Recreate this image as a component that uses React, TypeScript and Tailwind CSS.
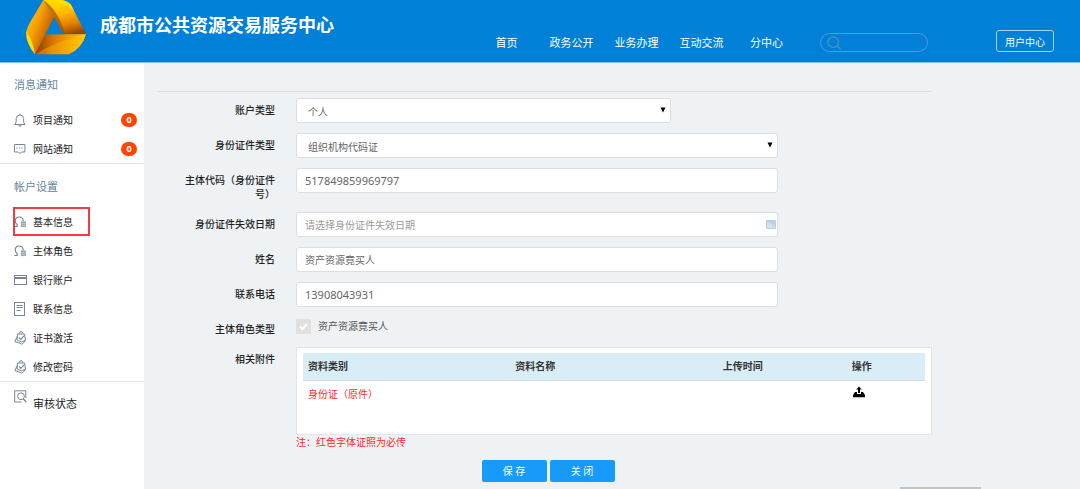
import React, { useState } from 'react';

const NAV = ['首页', '政务公开', '业务办理', '互动交流', '分中心'];

type IconName = 'bell' | 'message' | 'role' | 'card' | 'doc' | 'cert' | 'audit';

interface MenuItem {
  label: string;
  icon: IconName;
  badge?: number;
  active?: boolean;
}

const NOTICES: MenuItem[] = [
  { label: '项目通知', icon: 'bell', badge: 0 },
  { label: '网站通知', icon: 'message', badge: 0 },
];

const SETTINGS: MenuItem[] = [
  { label: '基本信息', icon: 'role', active: true },
  { label: '主体角色', icon: 'role' },
  { label: '银行账户', icon: 'card' },
  { label: '联系信息', icon: 'doc' },
  { label: '证书激活', icon: 'cert' },
  { label: '修改密码', icon: 'cert' },
];

const FIELD = 'block w-full h-[25px] rounded-[3px] border border-[#dcdfe1] bg-white text-[#666] outline-none';

const Logo = () => (
  <svg viewBox="78 0 180 165" className="w-[60px] h-[55px] shrink-0" aria-hidden="true">
    <defs>
      <linearGradient id="left" gradientUnits="userSpaceOnUse" x1="82" y1="60" x2="160" y2="90">
        <stop offset="0" stopColor="#ffc200" />
        <stop offset="0.4" stopColor="#f59a00" />
        <stop offset="1" stopColor="#b25200" />
      </linearGradient>
      <linearGradient id="right" gradientUnits="userSpaceOnUse" x1="190" y1="5" x2="215" y2="103">
        <stop offset="0" stopColor="#ffd800" />
        <stop offset="0.35" stopColor="#ffb400" />
        <stop offset="0.7" stopColor="#e08000" />
        <stop offset="1" stopColor="#9c4200" />
      </linearGradient>
      <linearGradient id="bottom" gradientUnits="userSpaceOnUse" x1="105" y1="125" x2="258" y2="125">
        <stop offset="0" stopColor="#8e3a00" />
        <stop offset="0.35" stopColor="#d87800" />
        <stop offset="0.75" stopColor="#ffa800" />
        <stop offset="1" stopColor="#ffd000" />
      </linearGradient>
    </defs>
    <path d="M130 0 L163 52 L137 103 L105 163 Q78 130 78 97 Q84 75 93 62 Z" fill="url(#left)" />
    <path d="M79 95 Q98 120 105 163 Q78 130 79 95 Z" fill="#ffe000" />
    <path d="M130 0 L186 0 Q203 3 213 14 L258 103 L190 103 L163 52 Z" fill="url(#right)" />
    <path d="M130 0 Q175 30 195 103 L190 103 L163 52 Z" fill="#a84c00" opacity="0.7" />
    <path d="M150 0 L186 0 Q203 3 213 14 L222 32 Q190 8 150 0 Z" fill="#ffe000" opacity="0.8" />
    <path d="M105 163 L137 103 L258 103 Q246 146 206 163 Z" fill="url(#bottom)" />
    <path d="M105 163 Q165 125 258 103 Q246 146 206 163 Z" fill="#ffc800" opacity="0.35" />
    <path d="M163 52 L190 103 L137 103 Z" fill="#0180d7" />
  </svg>
);

const Icon = ({ name }: { name: IconName }) => (
  <svg viewBox="0 0 14 14" className="w-[14px] h-[14px] shrink-0" fill="none" stroke="#74879a" strokeWidth="1" aria-hidden="true">
    {name === 'bell' && (
      <>
        <path d="M0.8 11.5 H11 Q9.6 10 9.6 8 V5.5 Q9.4 2 5.9 2 Q2.4 2 2.2 5.5 V8 Q2.2 10 0.8 11.5 Z" />
        <path d="M5.9 2 V0.5 M4.7 11.8 Q4.9 13.4 5.9 13.4 Q7 13.4 7.2 11.8" />
      </>
    )}
    {name === 'message' && (
      <>
        <path d="M0.5 2.5 H10.9 V10 H7.3 L5.8 11.5 L4.3 10 H0.5 Z" />
        <path d="M2.5 6 H9.2" strokeDasharray="1.2 1.2" />
      </>
    )}
    {name === 'role' && (
      <>
        <path d="M0.3 11.5 H3.2 V9.8 Q1.2 8.2 1.2 5.8 Q1.5 2 5.2 2 Q9 2 9.2 6" strokeWidth="1.2" />
        <rect x="7.2" y="6.8" width="4.2" height="5" fill="#9aa8b5" stroke="#8796a5" strokeWidth="0.6" />
        <path d="M7.4 8.5 H11.2 M7.4 10.2 H11.2" stroke="#d5dce2" strokeWidth="0.6" />
      </>
    )}
    {name === 'card' && (
      <>
        <rect x="0.5" y="2.5" width="12" height="9" />
        <path d="M0.5 5 H12.5" strokeWidth="2" />
      </>
    )}
    {name === 'doc' && (
      <>
        <rect x="0.5" y="0.5" width="10" height="13" />
        <path d="M2.5 3.5 H8.5 M2.5 5.5 H8.5 M2.5 8.5 H6.5" />
      </>
    )}
    {name === 'cert' && (
      <>
        <path d="M5.3 2.8 Q5.3 0.6 7 0.6 Q8.8 0.6 8.8 2.8 M3.6 3 H10.6 L11.4 9.4 L7.4 10.8 L3 9 Z" />
        <path d="M3.4 5.2 L0.8 10.6 L6 12.2 L7.4 13.2 L9 12.4 L11.4 9.4" />
        <path d="M5 6.3 L6.8 8.3 L10 4.8" strokeWidth="1.2" />
      </>
    )}
    {name === 'audit' && (
      <>
        <path d="M7.5 12 H0.7 V0.8 H11.8 V8" />
        <circle cx="7" cy="6.3" r="3.4" />
        <path d="M9.2 8.8 L12.3 12" strokeWidth="1.3" />
      </>
    )}
  </svg>
);

const SideLink = ({ item }: { item: MenuItem }) => (
  <li>
    <a href="#" className="relative flex items-center h-[29px] pl-3.5 pr-[7px] text-[10px] text-[#222]">
      <Icon name={item.icon} />
      <span className="ml-[5px]">{item.label}</span>
      {item.badge !== undefined && (
        <span className="ml-auto w-4 h-3.5 rounded-full bg-[#ff4500] text-white text-[9px] leading-[14px] font-bold text-center">
          {item.badge}
        </span>
      )}
      {item.active && <span className="absolute left-[13px] inset-y-0 w-[77px] border-2 border-[#f23c3f]" />}
    </a>
  </li>
);

const Row = ({ label, htmlFor, children }: { label: string; htmlFor?: string; children: React.ReactNode }) => (
  <div className="flex gap-[21px]">
    <label htmlFor={htmlFor} className="w-[117px] shrink-0 pl-5 pt-[5px] pb-px text-right leading-[14px] font-medium text-[#222]">
      {label}
    </label>
    <div className="flex-1 min-w-0">{children}</div>
  </div>
);

const SelectBox = ({ id, options, className }: { id: string; options: string[]; className: string }) => (
  <div className={`relative ${className}`}>
    <select id={id} className={`${FIELD} appearance-none pl-[11px] pr-5 pt-0.5 text-[10px]`}>
      {options.map(o => <option key={o}>{o}</option>)}
    </select>
    <svg viewBox="0 0 6 6" className="absolute right-[5px] top-[9px] w-1.5 h-1.5 pointer-events-none" aria-hidden="true">
      <path d="M0.5 0.5 H5.5 L3 5.5 Z" fill="#000" />
    </svg>
  </div>
);

export default function App() {
  const [code, setCode] = useState('517849859969797');
  const [expiry, setExpiry] = useState('');
  const [name, setName] = useState('资产资源竟买人');
  const [phone, setPhone] = useState('13908043931');

  return (
    <div className="min-h-screen flex flex-col bg-[#eef2f5] text-[10px] leading-[14px] font-['Noto_Sans','Noto_Sans_CJK_SC',sans-serif]">
      <header className="flex h-[63px] px-[26px] border-b border-[#7fbdea] bg-[#0180d7] text-white">
        <Logo />
        <h1 className="ml-3.5 h-[50px] leading-[50px] text-[18px] font-bold whitespace-nowrap">成都市公共资源交易服务中心</h1>
        <div className="ml-auto flex items-center h-[22px] mt-[30px]">
          <nav className="flex pt-[3px] text-[11px]">
            {NAV.map(n => (
              <a key={n} href="#" className="w-[65px] text-center whitespace-nowrap">{n}</a>
            ))}
          </nav>
          <div className="relative ml-[21px] pt-0.5">
            <input type="search" aria-label="搜索" className="block w-[108px] h-[19px] pl-6 pr-2 rounded-full border border-[#4c9bea] bg-transparent outline-none" />
            <svg viewBox="0 0 14 14" className="absolute left-[7px] top-[5px] w-3.5 h-3.5" fill="none" stroke="#5092b4" strokeWidth="1.2" aria-hidden="true">
              <circle cx="6.2" cy="6.2" r="5.3" />
              <path d="M10 10 L13.5 13" strokeWidth="1.5" />
            </svg>
          </div>
          <button className="ml-[68px] w-[58px] h-[22px] pt-px rounded-[3px] border border-[#a5d2f2] text-[10px] whitespace-nowrap">用户中心</button>
        </div>
      </header>

      <div className="flex flex-1">
        <aside className="w-36 shrink-0 bg-white">
          <section className="border-b border-[#dfe6ea]">
            <h2 className="flex items-center h-[42px] pt-0.5 pl-3.5 text-[11px] text-[#6585a0]">消息通知</h2>
            <ul>
              {NOTICES.map(item => <SideLink key={item.label} item={item} />)}
            </ul>
          </section>
          <section className="pt-px border-b border-[#dfe6ea]">
            <h2 className="flex items-center h-[42px] pt-0.5 pl-3.5 text-[11px] text-[#6585a0]">帐户设置</h2>
            <ul>
              {SETTINGS.map(item => <SideLink key={item.label} item={item} />)}
            </ul>
          </section>
          <a href="#" className="flex items-start pt-2 pl-3.5 text-[11px] text-[#222]">
            <Icon name="audit" />
            <span className="ml-[5px] pt-[7px]">审核状态</span>
          </a>
        </aside>

        <main className="flex-1 min-w-0 pt-7 pl-3.5">
          <form className="max-w-[774px] border-t border-[#dadfe3] pt-1.5" onSubmit={e => e.preventDefault()}>
            <div className="flex flex-col gap-2.5">
              <Row label="账户类型" htmlFor="account">
                <SelectBox id="account" options={['个人', '企业']} className="max-w-[375px]" />
              </Row>
              <Row label="身份证件类型" htmlFor="idtype">
                <SelectBox id="idtype" options={['组织机构代码证', '身份证']} className="max-w-[482px]" />
              </Row>
              <Row label="主体代码（身份证件号）" htmlFor="code">
                <input id="code" type="text" value={code} onChange={e => setCode(e.target.value)} className={`${FIELD} max-w-[482px] px-2 text-[11px]`} />
              </Row>
              <Row label="身份证件失效日期" htmlFor="expiry">
                <div className="relative max-w-[482px]">
                  <input
                    id="expiry"
                    type="text"
                    value={expiry}
                    onChange={e => setExpiry(e.target.value)}
                    placeholder="请选择身份证件失效日期"
                    className={`${FIELD} px-2 text-[10px] placeholder:text-[#999]`}
                  />
                  <svg viewBox="0 0 10 9" className="absolute right-0.5 top-2 w-2.5 h-[9px]" aria-hidden="true">
                    <rect width="10" height="9" rx="1" fill="#b4cfe4" />
                    <rect x="0.8" y="2.5" width="8.2" height="5.5" fill="#cfe2f0" />
                    <path d="M4.8 3.6 H8.2 L6.6 6.8" stroke="#f2b890" fill="none" />
                  </svg>
                </div>
              </Row>
              <Row label="姓名" htmlFor="name">
                <input id="name" type="text" value={name} onChange={e => setName(e.target.value)} className={`${FIELD} max-w-[482px] px-2 text-[10px]`} />
              </Row>
              <Row label="联系电话" htmlFor="phone">
                <input id="phone" type="text" value={phone} onChange={e => setPhone(e.target.value)} className={`${FIELD} max-w-[482px] px-2 text-[11px]`} />
              </Row>
              <Row label="主体角色类型" htmlFor="role">
                <label className="relative flex items-start gap-[7px] pt-0.5 text-[#555]">
                  <input id="role" type="checkbox" checked disabled className="appearance-none w-[15px] h-[15px] bg-[#e0e0e0]" />
                  <svg viewBox="0 0 15 15" className="absolute left-0 top-0.5 w-[15px] h-[15px]" fill="none" stroke="#fff" strokeWidth="2" aria-hidden="true">
                    <path d="M4 7.5 L6.5 10 L11 5" />
                  </svg>
                  <span>资产资源竟买人</span>
                </label>
              </Row>
              <Row label="相关附件">
                <div className="min-h-[88px] px-1.5 py-[5px] border border-[#e3e5e7] bg-white">
                  <table className="w-full table-fixed text-left">
                    <thead>
                      <tr className="h-[27px] bg-[#d9edf7] border-b border-[#d5e0e6] text-[#333]">
                        <th className="w-1/3 pl-[5px]">资料类别</th>
                        <th className="w-1/3 pl-[5px]">资料名称</th>
                        <th className="w-[129px] pl-[5px]">上传时间</th>
                        <th className="pl-[5px]">操作</th>
                      </tr>
                    </thead>
                    <tbody>
                      <tr className="h-[27px] text-[#ff2a2a]">
                        <td className="pl-[5px]">身份证（原件）</td>
                        <td></td>
                        <td></td>
                        <td className="pl-1.5 pb-1">
                          <button type="button" aria-label="上传" className="block">
                            <svg viewBox="0 0 12 12" className="w-3 h-3" fill="#000" aria-hidden="true">
                              <path d="M6 0.5 L8.8 3.6 H7 V7 H5 V3.6 H3.2 Z" />
                              <path d="M2 6 H4 V8 H8 V6 H10 L12 9 V11.2 H0 V9 Z" />
                            </svg>
                          </button>
                        </td>
                      </tr>
                    </tbody>
                  </table>
                </div>
                <p className="text-[#ff2a2a]">注：红色字体证照为必传</p>
              </Row>
            </div>
            <div className="flex justify-center gap-[3px] mt-[11px] pl-1.5">
              <button type="submit" className="w-[65px] h-[22px] rounded-[2px] bg-[#169bfa] text-white">保 存</button>
              <button type="button" className="w-[65px] h-[22px] rounded-[2px] bg-[#169bfa] text-white">关 闭</button>
            </div>
          </form>
        </main>
      </div>

      <div className="fixed bottom-0 right-[99px] w-[81px] h-0.5 bg-[#c6c4c3]" />
    </div>
  );
}
